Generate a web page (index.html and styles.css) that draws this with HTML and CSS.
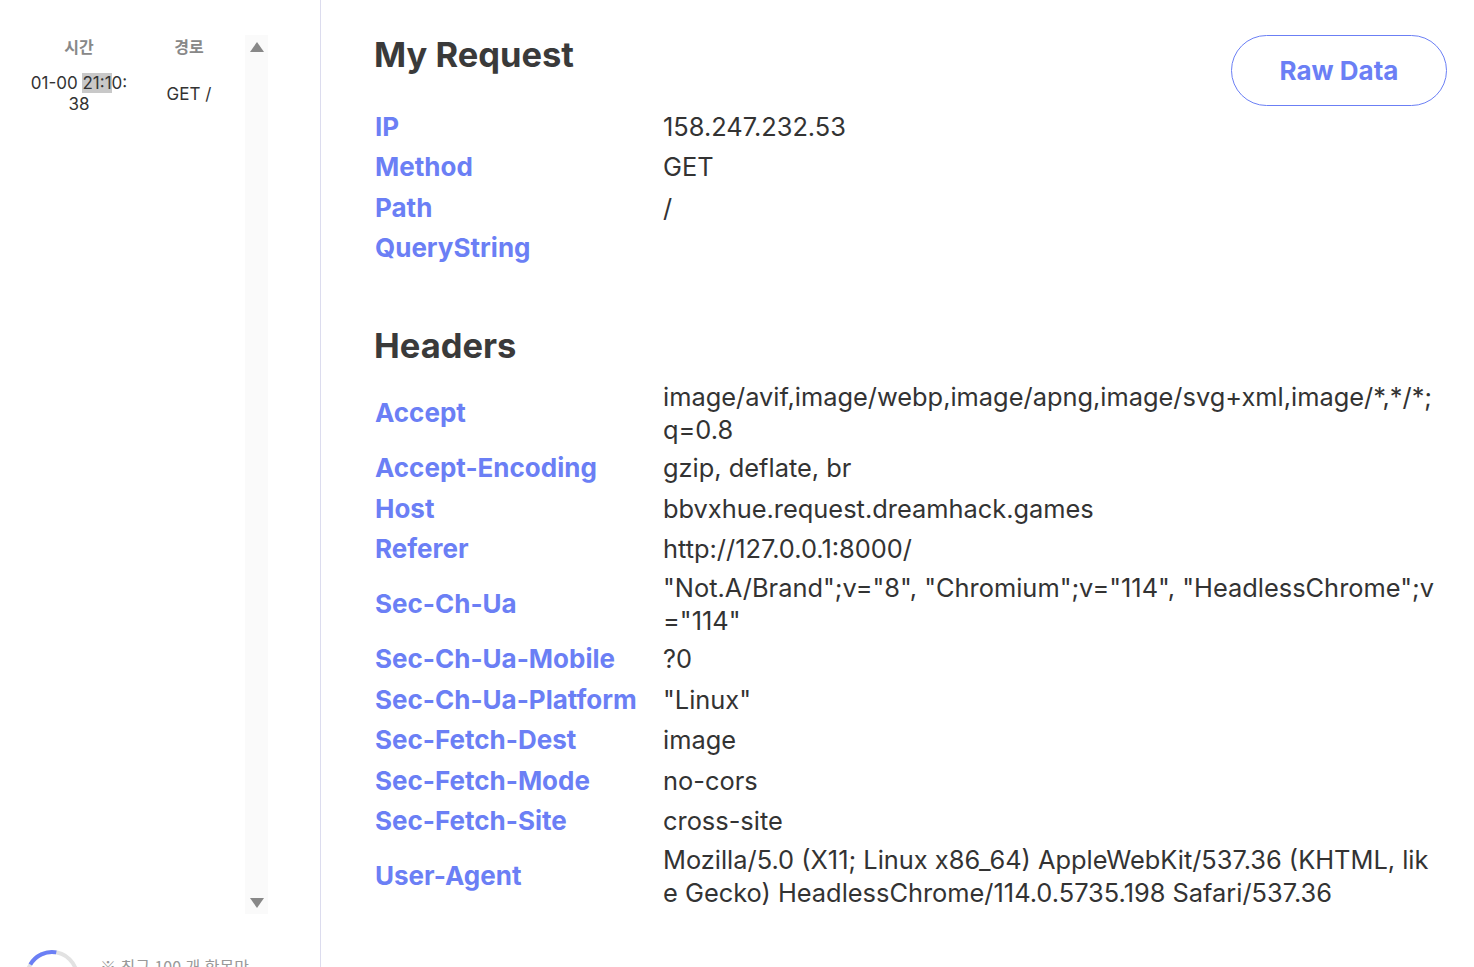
FILE: index.html
```html
<!DOCTYPE html>
<html lang="ko">
<head>
<meta charset="utf-8">
<title>My Request</title>
<link rel="stylesheet" href="styles.css">
</head>
<body>
<aside class="sidebar">
  <div class="list">
    <div class="table">
      <div class="thead">
        <div class="col-time">시간</div>
        <div class="col-path">경로</div>
      </div>
      <div class="trow">
        <div class="col-time">01-00 <span class="hl">21:1</span>0:<br>38</div>
        <div class="col-path">GET /</div>
      </div>
    </div>
    <div class="scrollbar">
      <span class="arrow up"></span>
      <span class="arrow down"></span>
    </div>
  </div>
  <div class="footer">
    <svg class="spinner" width="60" height="60" viewBox="0 0 60 60">
      <circle cx="30" cy="30" r="25" fill="none" stroke="#e2e2e2" stroke-width="4"/>
      <path d="M8.3 17.5 A25 25 0 0 1 34.3 5.4" fill="none" stroke="#6b7ff5" stroke-width="4"/>
    </svg>
    <span class="note">※ 최근 100 개 항목만</span>
  </div>
</aside>
<main class="main">
  <div class="head">
    <h1 class="title">My Request</h1>
    <button class="raw">Raw Data</button>
  </div>
  <div class="kv">
    <div class="row"><div class="k">IP</div><div class="v">158.247.232.53</div></div>
    <div class="row"><div class="k">Method</div><div class="v">GET</div></div>
    <div class="row"><div class="k">Path</div><div class="v">/</div></div>
    <div class="row"><div class="k">QueryString</div><div class="v"></div></div>
  </div>
  <h2 class="title sub">Headers</h2>
  <div class="kv">
    <div class="row"><div class="k">Accept</div><div class="v">image/avif,image/webp,image/apng,image/svg+xml,image/*,*/*;q=0.8</div></div>
    <div class="row"><div class="k">Accept-Encoding</div><div class="v">gzip, deflate, br</div></div>
    <div class="row"><div class="k">Host</div><div class="v">bbvxhue.request.dreamhack.games</div></div>
    <div class="row"><div class="k">Referer</div><div class="v">http://127.0.0.1:8000/</div></div>
    <div class="row"><div class="k">Sec-Ch-Ua</div><div class="v">"Not.A/Brand";v="8", "Chromium";v="114", "HeadlessChrome";v="114"</div></div>
    <div class="row"><div class="k">Sec-Ch-Ua-Mobile</div><div class="v">?0</div></div>
    <div class="row"><div class="k">Sec-Ch-Ua-Platform</div><div class="v">"Linux"</div></div>
    <div class="row"><div class="k">Sec-Fetch-Dest</div><div class="v">image</div></div>
    <div class="row"><div class="k">Sec-Fetch-Mode</div><div class="v">no-cors</div></div>
    <div class="row"><div class="k">Sec-Fetch-Site</div><div class="v">cross-site</div></div>
    <div class="row"><div class="k">User-Agent</div><div class="v">Mozilla/5.0 (X11; Linux x86_64) AppleWebKit/537.36 (KHTML, like Gecko) HeadlessChrome/114.0.5735.198 Safari/537.36</div></div>
  </div>
</main>
</body>
</html>
```

FILE: styles.css
```css
* { box-sizing: border-box; }
html, body { margin: 0; padding: 0; }
body {
  display: flex;
  height: 967px;
  overflow: hidden;
  background: #fff;
  font-family: Inter, "Noto Sans CJK KR", sans-serif;
  color: #333;
}
.sidebar {
  width: 321px;
  flex: none;
  border-right: 1px solid #dcdcee;
  display: flex;
  flex-direction: column;
}
.list {
  flex: none;
  display: flex;
  padding-top: 35px;
  height: 914px;
}
.table {
  width: 245px;
}
.thead, .trow {
  display: flex;
}
.col-time { width: 158px; text-align: center; }
.col-path { width: 62px; text-align: center; }
.thead {
  font-size: 16px;
  font-weight: 700;
  color: #888;
  height: 22px;
  align-items: center;
  font-family: "Noto Sans CJK KR", sans-serif;
}
.trow {
  align-items: center;
  font-size: 17px;
  line-height: 21px;
  padding-top: 16px;
}
.hl { background: #c8c8c8; }
.scrollbar {
  width: 23px;
  background: #fafafa;
  position: relative;
}
.arrow {
  position: absolute;
  left: 5px;
  width: 0; height: 0;
  border-left: 7px solid transparent;
  border-right: 7px solid transparent;
}
.arrow.up { top: 7px; border-bottom: 10px solid #888; }
.arrow.down { bottom: 6px; border-top: 10px solid #888; }
.footer {
  flex: none;
  display: flex;
  align-items: flex-start;
  padding: 33px 0 0 22px;
}
.spinner { flex: none; }
.note {
  margin: 7px 0 0 18px;
  font-size: 16px;
  color: #999;
  font-family: "Noto Sans CJK KR", sans-serif;
  white-space: nowrap;
}
.main {
  flex: 1;
  padding: 0 27px 0 53px;
}
.head {
  display: flex;
  justify-content: space-between;
  align-items: flex-start;
  padding-top: 35px;
  height: 106px;
}
.title {
  margin: 0;
  font-size: 34.5px;
  font-weight: 700;
  color: #3a3a3a;
  line-height: 40px;
}
.sub { margin: 58px 0 12px; }
.raw {
  width: 216px;
  height: 71px;
  border: 1px solid #6b7ff5;
  border-radius: 36px;
  background: #fff;
  color: #6b7ff5;
  font-family: Inter, sans-serif;
  font-size: 26px;
  font-weight: 700;
  cursor: pointer;
}
.kv { padding-right: 13px; }
.row {
  display: grid;
  grid-template-columns: 288px 1fr;
  align-items: center;
  min-height: 40.5px;
  padding: 1.75px 0 1.75px 1px;
}
.k {
  font-size: 26px;
  font-weight: 700;
  color: #6b7ff5;
  line-height: 33px;
}
.v {
  font-size: 25.4px;
  line-height: 33px;
  color: #333;
  word-break: break-all;
}
```
